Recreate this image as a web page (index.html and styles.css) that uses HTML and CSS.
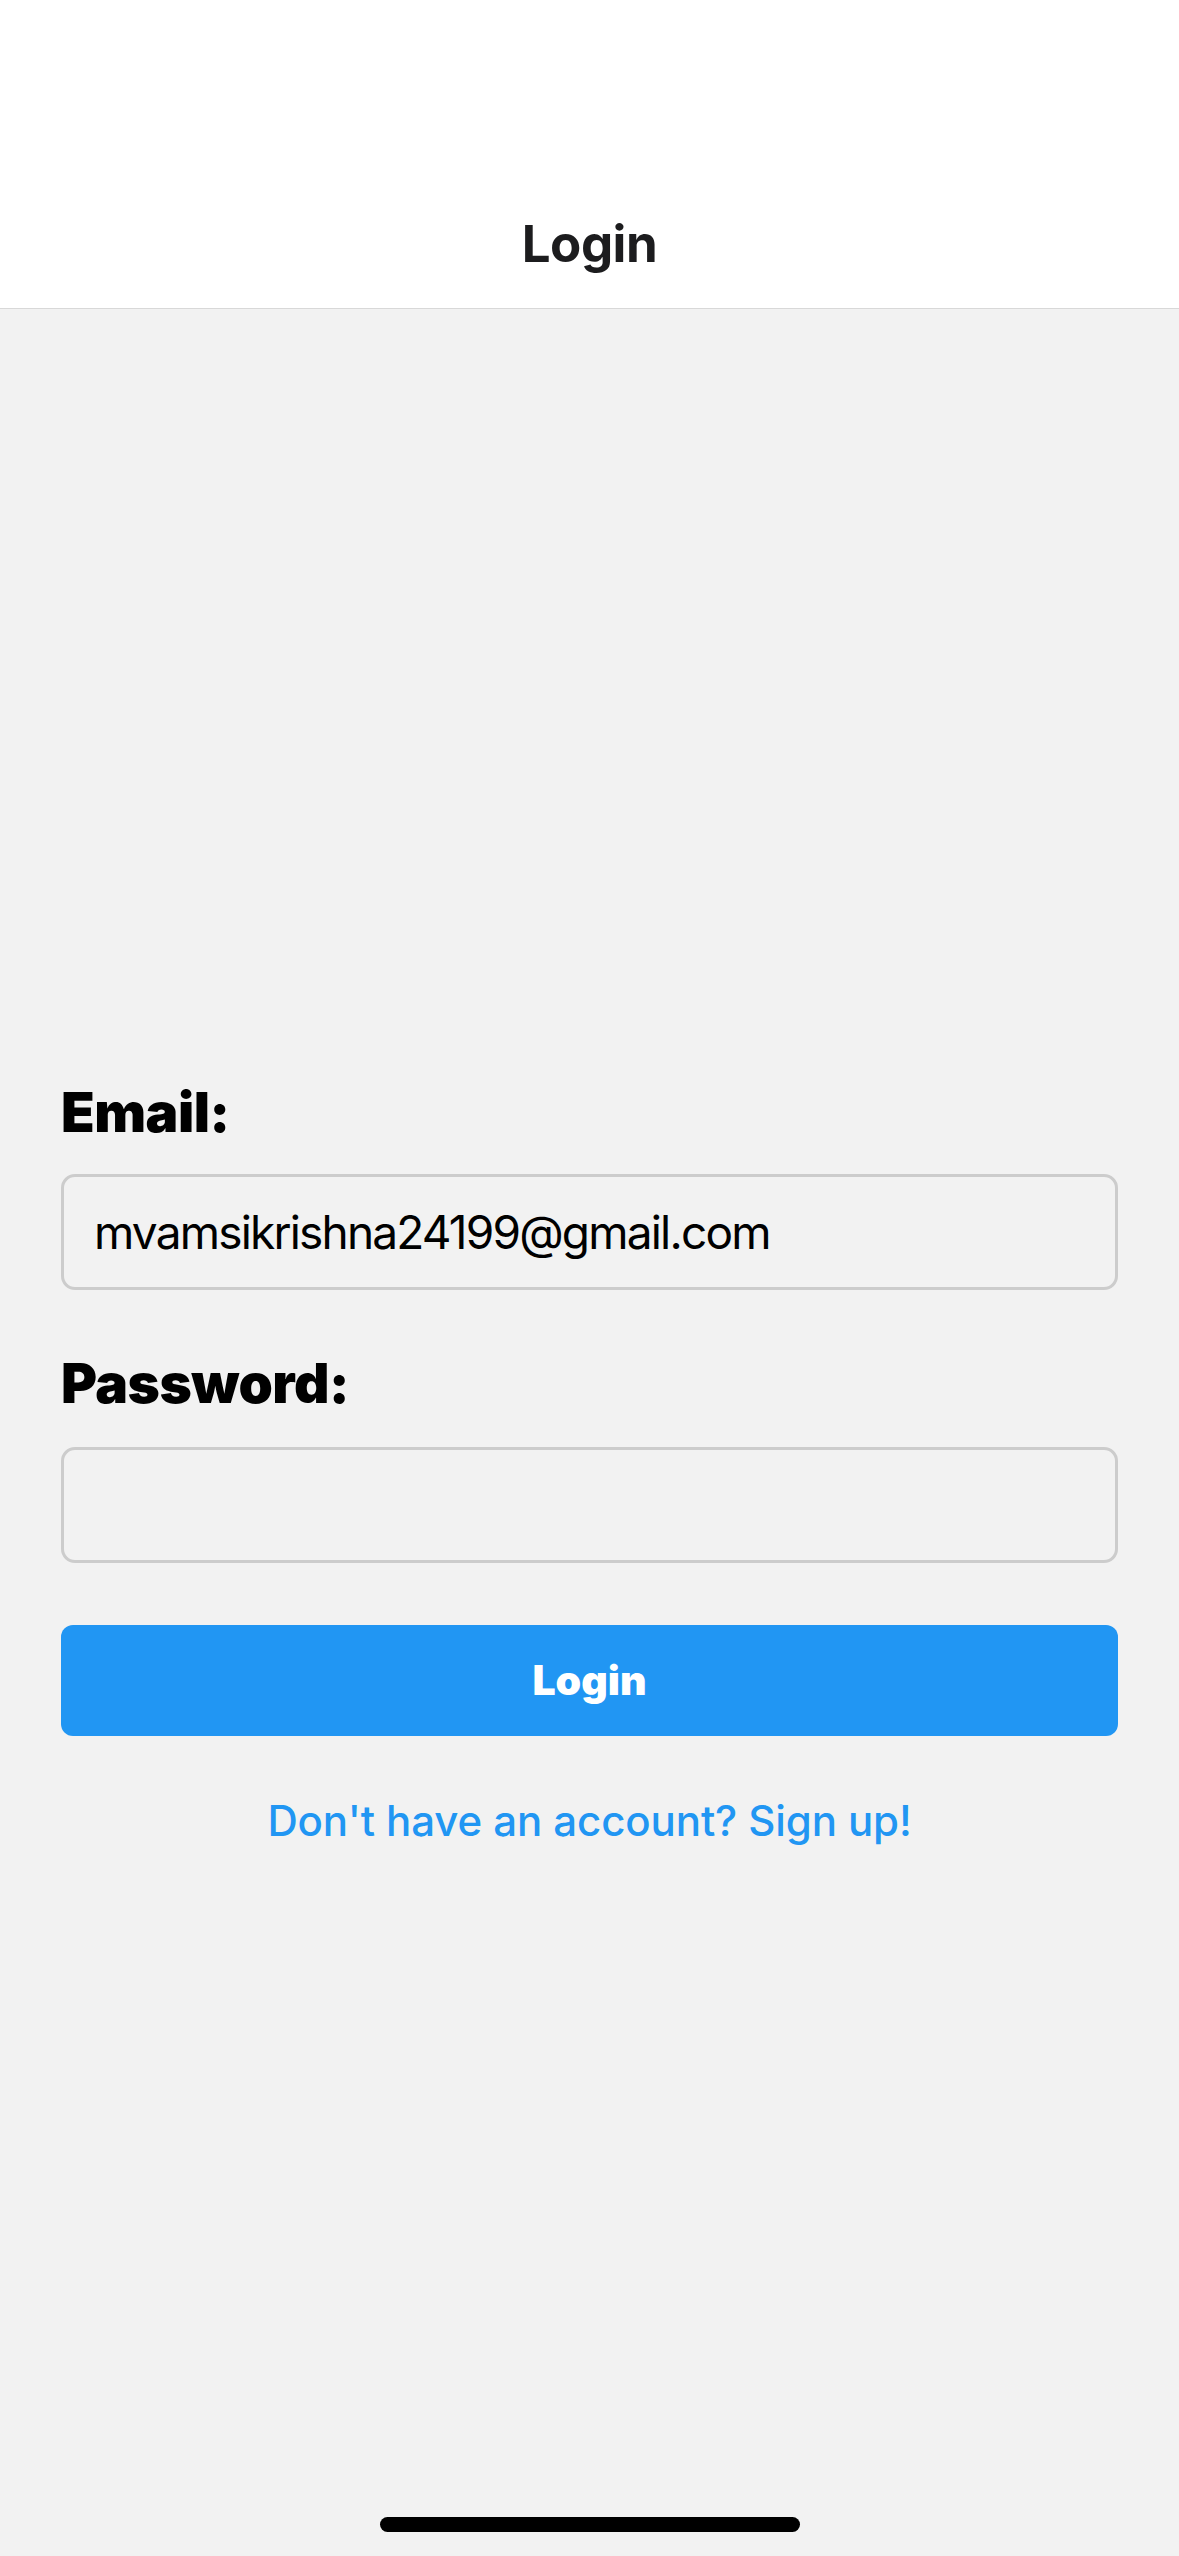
FILE: index.html
```html
<!DOCTYPE html>
<html lang="en">
<head>
<meta charset="utf-8">
<title>Login</title>
<link rel="stylesheet" href="styles.css">
</head>
<body>
<div class="screen">
  <header class="navbar">
    <h1 class="nav-title">Login</h1>
  </header>
  <main class="content">
    <form class="login-form">
      <label class="field-label" for="email">Email:</label>
      <div class="text-input" id="email">mvamsikrishna24199@gmail.com</div>
      <label class="field-label field-label--spaced" for="password">Password:</label>
      <div class="text-input" id="password"></div>
      <div class="primary-button">Login</div>
      <p class="signup-link">Don't have an account? Sign up!</p>
    </form>
  </main>
  <footer class="home-area">
    <div class="home-indicator"></div>
  </footer>
</div>
</body>
</html>
```

FILE: styles.css
```css
* {
  box-sizing: border-box;
}

html, body {
  margin: 0;
  padding: 0;
}

body {
  font-family: Inter, "Noto Sans", "Liberation Sans", sans-serif;
  background: #f2f2f2;
}

.screen {
  width: 1179px;
  height: 2556px;
  display: flex;
  flex-direction: column;
  background: #f2f2f2;
}

.navbar {
  height: 309px;
  background: #ffffff;
  border-bottom: 1px solid #d8d8d8;
  padding-top: 213px;
  display: flex;
  justify-content: center;
}

.nav-title {
  margin: 0;
  font-size: 51px;
  line-height: 62px;
  font-weight: 700;
  color: #1c1c1e;
  letter-spacing: -0.5px;
}

.content {
  flex: 1;
  padding: 770px 61px 0 61px;
}

.login-form {
  display: flex;
  flex-direction: column;
}

.field-label {
  display: block;
  font-size: 55px;
  line-height: 66px;
  font-weight: 900;
  color: #000000;
  letter-spacing: -0.5px;
  margin-bottom: 29px;
}

.field-label--spaced {
  margin-top: 60px;
  margin-bottom: 31px;
}

.text-input {
  height: 116px;
  border: 3px solid #cccccc;
  border-radius: 14px;
  background: #f2f2f2;
  padding: 0 30px;
  display: flex;
  align-items: center;
  font-size: 46px;
  font-weight: 400;
  color: #000000;
  letter-spacing: -1.8px;
}

.primary-button {
  margin-top: 62px;
  height: 111px;
  border-radius: 12px;
  background: #2196f3;
  color: #ffffff;
  display: flex;
  align-items: center;
  justify-content: center;
  font-size: 41px;
  font-weight: 900;
  letter-spacing: 0;
  padding-bottom: 2px;
}

.signup-link {
  margin: 59px 0 0 0;
  text-align: center;
  font-size: 42px;
  line-height: 51px;
  font-weight: 500;
  color: #2196f3;
  letter-spacing: -0.1px;
}

.home-area {
  height: 39px;
  display: flex;
  justify-content: center;
}

.home-indicator {
  width: 420px;
  height: 15px;
  border-radius: 8px;
  background: #000000;
}
```
